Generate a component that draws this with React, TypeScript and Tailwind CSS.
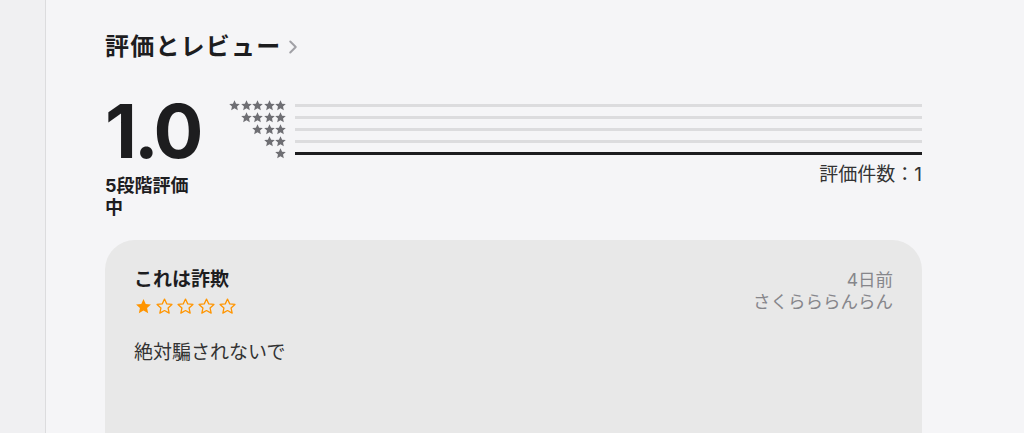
import { ChevronRight } from "lucide-react";

const JP = "font-['Inter','Noto_Sans_CJK_JP',sans-serif]";

const HISTOGRAM = [
  { stars: 5, pct: 0 },
  { stars: 4, pct: 0 },
  { stars: 3, pct: 0 },
  { stars: 2, pct: 0 },
  { stars: 1, pct: 100 },
];

const STAR_PATH =
  "M12 2.6l2.8 6.1 6.6.7-4.9 4.5 1.4 6.5L12 17.1l-5.9 3.3 1.4-6.5-4.9-4.5 6.6-.7z";

function Star({
  filled,
  className,
  tight = false,
}: {
  filled: boolean;
  className?: string;
  tight?: boolean;
}) {
  return (
    <svg viewBox={tight ? "2.2 2.2 19.6 19.6" : "0 0 24 24"} className={className} aria-hidden>
      <path
        d={STAR_PATH}
        fill={filled ? "currentColor" : "none"}
        stroke="currentColor"
        strokeWidth={filled ? 0 : 1.6}
        strokeLinejoin="round"
      />
    </svg>
  );
}

function RatingBars() {
  return (
    <div className="flex flex-1 flex-col pt-[6px]">
      {HISTOGRAM.map((row) => (
        <div key={row.stars} className="flex h-[12px] items-center gap-[9px]">
          <div className="flex w-[58px] justify-end gap-[0.5px] text-[#6e6e73]">
            {Array.from({ length: row.stars }).map((_, i) => (
              <Star key={i} filled tight className="h-[11px] w-[11px]" />
            ))}
          </div>
          <div className="relative h-[3px] flex-1 bg-[#dcdcde]">
            <div
              className="absolute inset-y-0 left-0 bg-[#1d1d1f]"
              style={{ width: `${row.pct}%` }}
            />
          </div>
        </div>
      ))}
      <div className={`${JP} mt-[3px] text-right text-[19px] leading-[26px] text-[#333]`}>
        評価件数：1
      </div>
    </div>
  );
}

function ReviewCard() {
  return (
    <div className="h-[220px] rounded-t-[30px] bg-[#e8e8e8] px-[29px] pt-[27px]">
      <div className="flex justify-between">
        <div>
          <h3 className={`${JP} text-[19px] font-bold leading-[26px] text-[#1d1d1f]`}>
            これは詐欺
          </h3>
          <div className="mt-[4px] flex gap-[2px] text-[#ff9500]">
            <Star filled className="h-[19px] w-[19px]" />
            <Star filled={false} className="h-[19px] w-[19px]" />
            <Star filled={false} className="h-[19px] w-[19px]" />
            <Star filled={false} className="h-[19px] w-[19px]" />
            <Star filled={false} className="h-[19px] w-[19px]" />
          </div>
        </div>
        <div className={`${JP} mt-[2px] text-right text-[17.5px] leading-[22px] text-[#86868b]`}>
          <div>4日前</div>
          <div>さくらららんらん</div>
        </div>
      </div>
      <p className={`${JP} mt-[23px] text-[19px] leading-[28px] text-[#333]`}>絶対騙されないで</p>
    </div>
  );
}

export default function App() {
  return (
    <div className="flex h-[433px] overflow-hidden bg-[#f5f5f7]">
      <aside className="w-[46px] shrink-0 border-r border-[#dcdcde] bg-[#f0f0f2]" />
      <main className="w-[876px] pl-[59px] pt-[31px]">
        <div className="flex items-center">
          <h2 className={`${JP} text-[24px] font-bold leading-[32px] tracking-[1.2px] text-[#1d1d1f]`}>
            評価とレビュー
          </h2>
          <ChevronRight className="ml-[1px] h-[22px] w-[22px] text-[#a1a1a6]" strokeWidth={2.2} />
        </div>
        <div className="mt-[30px] flex gap-[26px]">
          <div className="w-[97px]">
            <div className="font-['Inter',sans-serif] text-[74px] font-bold leading-[76px] tracking-[-3px] text-[#1d1d1f]">
              1.0
            </div>
            <div className={`${JP} mt-[6px] text-[18px] font-bold leading-[22px] text-[#1d1d1f]`}>
              5段階評価
              <br />中
            </div>
          </div>
          <RatingBars />
        </div>
        <div className="mt-[21px]">
          <ReviewCard />
        </div>
      </main>
    </div>
  );
}
